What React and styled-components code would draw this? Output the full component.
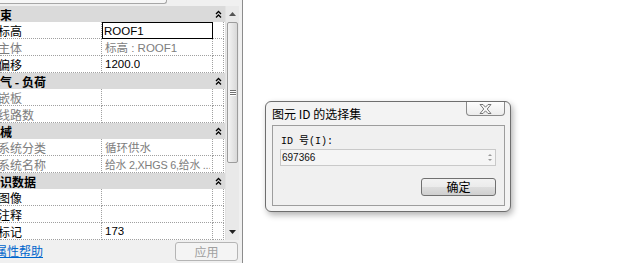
import React from "react";
import styled, { createGlobalStyle } from "styled-components";

// 属性面板 + 图元 ID 选择集 对话框

const GlobalStyle = createGlobalStyle`
  html, body {
    margin: 0;
    padding: 0;
    background: #ffffff;
  }
  body {
    font-family: "Noto Sans CJK SC", "Noto Sans", sans-serif;
    font-size: 12px;
    color: #000;
  }
`;

const rows = [
  { type: "group", label: "约束" },
  { label: "标高", value: "ROOF1", focused: true },
  { label: "主体", value: "标高 : ROOF1", gray: true },
  { label: "偏移", value: "1200.0" },
  { type: "group", label: "电气 - 负荷" },
  { label: "嵌板", gray: true },
  { label: "线路数", gray: true },
  { type: "group", label: "机械" },
  { label: "系统分类", value: "循环供水", gray: true },
  { label: "系统名称", value: "给水 2,XHGS 6,给水 ...", gray: true, tight: true },
  { type: "group", label: "标识数据" },
  { label: "图像" },
  { label: "注释" },
  { label: "标记", value: "173" },
];

function Collapse() {
  return (
    <svg width="7" height="8" viewBox="0 0 7 8">
      <path
        d="M1 4 L3.5 1.5 L6 4 M1 7.5 L3.5 5 L6 7.5"
        fill="none"
        stroke="#000"
        strokeWidth="1.3"
      />
    </svg>
  );
}

function Arrow({ down }) {
  return (
    <svg width="7" height="4" viewBox="0 0 7 4">
      <path d={down ? "M0 0 L7 0 L3.5 4 Z" : "M0 4 L7 4 L3.5 0 Z"} fill={down ? "#222" : "#555"} />
    </svg>
  );
}

function CloseGlyph() {
  return (
    <svg width="13" height="10" viewBox="0 0 13 10">
      <path
        d="M1 0.5 L4 0.5 L6.5 3.2 L9 0.5 L12 0.5 L8.2 5 L12 9.5 L9 9.5 L6.5 6.8 L4 9.5 L1 9.5 L4.8 5 Z"
        fill="#fafafa"
        stroke="#6a6a6a"
        strokeWidth="0.9"
      />
    </svg>
  );
}

export default function App() {
  return (
    <Page>
      <GlobalStyle />
      <Panel>
        <TopStrip>
          <DropStub />
        </TopStrip>
        <Body>
          <Table>
            {rows.map((r, i) =>
              r.type === "group" ? (
                <GroupHeader key={i}>
                  <Shift $shift={-12}>{r.label}</Shift>
                  <ChevronBox>
                    <Collapse />
                  </ChevronBox>
                </GroupHeader>
              ) : (
                <Row key={i}>
                  <NameCell $gray={r.gray}>
                    <Shift $shift={-2}>{r.label}</Shift>
                  </NameCell>
                  <ValueCell $gray={r.gray} $focused={r.focused}>
                    <ValueText $tight={r.tight}>{r.value}</ValueText>
                  </ValueCell>
                  <ExtraCell />
                </Row>
              )
            )}
          </Table>
          <Scrollbar>
            <ScrollBtn>
              <Arrow />
            </ScrollBtn>
            <Track>
              <Thumb>
                <Grip />
                <Grip />
                <Grip />
              </Thumb>
            </Track>
            <ScrollBtn>
              <Arrow down />
            </ScrollBtn>
          </Scrollbar>
        </Body>
        <BottomBar>
          <HelpLink>
            <Shift $shift={-5}>属性帮助</Shift>
          </HelpLink>
          <ApplyButton>应用</ApplyButton>
        </BottomBar>
      </Panel>

      <Desktop>
        <Dialog>
          <TitleBar>
            <Title>图元 ID 的选择集</Title>
            <CloseButton>
              <CloseGlyph />
            </CloseButton>
          </TitleBar>
          <Client>
            <FieldLabel>ID 号(I):</FieldLabel>
            <SpinInput>
              <InputText>697366</InputText>
              <Spinner>
                <SmallTri />
                <SmallTri $down />
              </Spinner>
            </SpinInput>
            <ButtonRow>
              <OkButton>确定</OkButton>
            </ButtonRow>
          </Client>
        </Dialog>
      </Desktop>
    </Page>
  );
}

const Page = styled.div`
  display: flex;
  width: 620px;
  height: 263px;
  overflow: hidden;
  background: #fff;
`;

const Panel = styled.div`
  width: 242px;
  flex: none;
  display: flex;
  flex-direction: column;
  background: #f0f0f0;
  border-right: 1px solid #8c8c8c;
  overflow: hidden;
`;

const TopStrip = styled.div`
  height: 6px;
  flex: none;
`;

const DropStub = styled.div`
  width: 166px;
  height: 3px;
  background: #f7f7f7;
  border-bottom: 1px solid #a7a7a7;
  border-right: 1px solid #a7a7a7;
  border-bottom-right-radius: 3px;
`;

const Body = styled.div`
  display: flex;
  height: 234px;
  flex: none;
  padding-right: 4px;
`;

const Table = styled.div`
  width: 225px;
  flex: none;
  overflow: hidden;
  display: flex;
  flex-direction: column;
`;

const GroupHeader = styled.div`
  height: 16px;
  flex: none;
  display: flex;
  align-items: center;
  justify-content: space-between;
  background: #dadada;
  font-weight: bold;
  white-space: nowrap;
  overflow: hidden;
`;

const ChevronBox = styled.div`
  width: 12px;
  display: flex;
  justify-content: center;
  margin-right: 1px;
`;

const Shift = styled.span`
  margin-left: ${(p) => p.$shift}px;
  white-space: nowrap;
`;

const Row = styled.div`
  height: 17px;
  flex: none;
  display: grid;
  grid-template-columns: 102px 111px 11px;
  background: #fff;
`;

const Cell = styled.div`
  box-sizing: border-box;
  border-right: 1px dotted #a0a0a0;
  border-bottom: 1px dotted #a0a0a0;
  overflow: hidden;
  white-space: nowrap;
  display: flex;
  align-items: center;
`;

const NameCell = styled(Cell)`
  color: ${(p) => (p.$gray ? "#7d7d7d" : "#000")};
`;

const ValueCell = styled(Cell)`
  padding-left: 3px;
  padding-right: 2px;
  font-family: "Liberation Sans", "Noto Sans CJK SC", sans-serif;
  font-size: 11.5px;
  color: ${(p) => (p.$gray ? "#7d7d7d" : "#000")};
  ${(p) =>
    p.$focused &&
    `
    border: 1px solid #000;
    padding-left: 1px;
  `}
`;

const ValueText = styled.span`
  overflow: hidden;
  text-overflow: clip;
  white-space: nowrap;
  font-size: ${(p) => (p.$tight ? "10.8px" : "inherit")};
  letter-spacing: ${(p) => (p.$tight ? "-0.2px" : "normal")};
`;

const ExtraCell = styled(Cell)``;

const Scrollbar = styled.div`
  width: 13px;
  flex: none;
  display: flex;
  flex-direction: column;
  background: #e9e9e9;
  border-left: 1px solid #e2e2e2;
`;

const ScrollBtn = styled.div`
  height: 16px;
  flex: none;
  display: flex;
  align-items: center;
  justify-content: center;
`;

const Track = styled.div`
  flex: 1;
  display: flex;
  flex-direction: column;
  padding: 0 1px;
`;

const Thumb = styled.div`
  height: 141px;
  box-sizing: border-box;
  border: 1px solid #9c9c9c;
  border-radius: 2px;
  background: linear-gradient(to right, #f4f4f4, #e3e3e3 60%, #d8d8d8);
  display: flex;
  flex-direction: column;
  align-items: center;
  justify-content: center;
  gap: 1px;
`;

const Grip = styled.div`
  width: 6px;
  height: 1px;
  background: #6f6f6f;
  box-shadow: 0 1px 0 #fff;
`;

const BottomBar = styled.div`
  flex: 1;
  display: flex;
  align-items: center;
  justify-content: space-between;
  padding-right: 4px;
`;

const HelpLink = styled.a`
  color: #0066cc;
  text-decoration: underline;
  cursor: pointer;
  margin-top: -2px;
`;

const ApplyButton = styled.button`
  width: 63px;
  height: 19px;
  padding: 0;
  border: 1px solid #b5b5b5;
  border-radius: 3px;
  background: #f4f4f4;
  color: #a0a0a0;
  font-family: "Noto Sans CJK SC", sans-serif;
  font-size: 12px;
  line-height: 17px;
`;

const Desktop = styled.div`
  flex: 1;
  padding: 101px 0 0 22px;
`;

const Dialog = styled.div`
  width: 246px;
  height: 111px;
  box-sizing: border-box;
  display: flex;
  flex-direction: column;
  background: #f3f3f3;
  border: 1px solid #6e6e6e;
  border-radius: 6px;
  box-shadow: 2px 3px 6px rgba(0, 0, 0, 0.3);
`;

const TitleBar = styled.div`
  height: 23px;
  flex: none;
  display: flex;
  justify-content: space-between;
  align-items: flex-start;
  padding: 0 5px 0 6px;
`;

const Title = styled.div`
  font-size: 12px;
  line-height: 23px;
  color: #000;
`;

const CloseButton = styled.div`
  width: 39px;
  height: 14px;
  box-sizing: border-box;
  border: 1px solid #8a8a8a;
  border-top: none;
  border-radius: 0 0 4px 4px;
  background: linear-gradient(#fdfdfd, #ececec);
  display: flex;
  align-items: center;
  justify-content: center;
`;

const Client = styled.div`
  flex: 1;
  margin: 0 5px 5px 6px;
  border: 1px solid #9d9d9d;
  background: #f0f0f0;
  padding: 9px 8px 0 7px;
  display: flex;
  flex-direction: column;
`;

const FieldLabel = styled.div`
  height: 14px;
  line-height: 14px;
  font-family: "Liberation Mono", "Noto Sans CJK SC", monospace;
  font-size: 10px;
  padding-left: 1px;
`;

const SpinInput = styled.div`
  height: 17px;
  box-sizing: border-box;
  display: flex;
  align-items: center;
  border: 1px solid #c9c9c9;
  background: #f5f5f5;
`;

const InputText = styled.div`
  flex: 1;
  padding-left: 1px;
  font-family: "Liberation Sans", sans-serif;
  font-size: 10px;
  color: #111;
`;

const Spinner = styled.div`
  width: 11px;
  height: 100%;
  display: flex;
  flex-direction: column;
  align-items: center;
  justify-content: center;
  gap: 3px;
`;

const SmallTri = styled.div`
  width: 0;
  height: 0;
  border-left: 2.5px solid transparent;
  border-right: 2.5px solid transparent;
  ${(p) =>
    p.$down
      ? "border-top: 2px solid #9a9a9a;"
      : "border-bottom: 2px solid #9a9a9a;"}
`;

const ButtonRow = styled.div`
  display: flex;
  justify-content: flex-end;
  margin-top: 12px;
`;

const OkButton = styled.button`
  width: 75px;
  height: 18px;
  padding: 0;
  border: 1px solid #707070;
  border-radius: 3px;
  background: linear-gradient(#f2f2f2 0%, #ebebeb 50%, #dddddd 51%, #cfcfcf 100%);
  font-family: "Noto Sans CJK SC", sans-serif;
  font-size: 12px;
  line-height: 16px;
  color: #000;
`;
